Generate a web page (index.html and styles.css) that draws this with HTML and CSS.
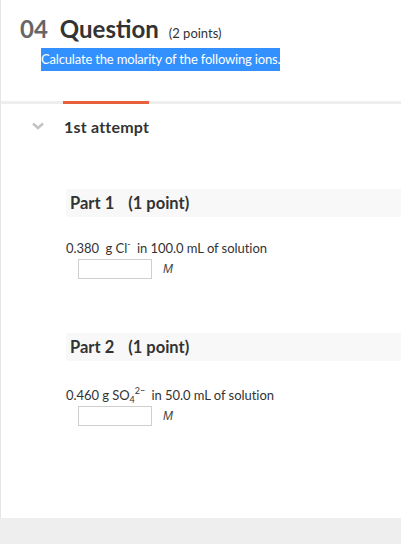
FILE: index.html
```html
<!DOCTYPE html>
<html>
<head>
<meta charset="utf-8">
<link rel="stylesheet" href="styles.css">
</head>
<body>
<div class="page">
  <div class="header">
    <h1 class="title"><span class="num">04</span><span class="q">Question</span><span class="pts">(2 points)</span></h1>
    <p class="prompt"><span class="sel">Calculate the molarity of the following ions.</span></p>
  </div>
  <div class="sep"><div class="tab"></div></div>
  <div class="attempt">
    <svg class="chev" width="12" height="8" viewBox="0 0 12 8"><path d="M1 1.5 L6 6 L11 1.5" fill="none" stroke="#c4c4c4" stroke-width="2.6"/></svg>
    <span class="att">1st attempt</span>
  </div>
  <div class="part">
    <div class="part-head"><span class="pname">Part 1</span><span>(1 point)</span></div>
    <div class="problem">0.380&nbsp; g Cl<sup class="sup">-</sup>&nbsp; in 100.0 mL of solution</div>
    <div class="answer"><span class="box"></span><span class="unit">M</span></div>
  </div>
  <div class="part part2">
    <div class="part-head"><span class="pname">Part 2</span><span>(1 point)</span></div>
    <div class="problem p2">0.460 g SO<sub class="sub">4</sub><sup class="sup2">2−</sup> in 50.0 mL of solution</div>
    <div class="answer"><span class="box"></span><span class="unit">M</span></div>
  </div>
</div>
<div class="footer"></div>
</body>
</html>
```
FILE: styles.css
```css
html, body { margin: 0; padding: 0; }
body { background: #eeeeee; font-family: Lato, "Open Sans", sans-serif; color: #333; width: 401px; height: 544px; overflow: hidden; }
.page { background: #fff; height: 518px; border-left: 1px solid #e6e6e6; box-sizing: border-box; }
.header { padding: 14px 0 0 19px; height: 88px; box-sizing: border-box; }
.title { margin: 0; font-weight: 700; line-height: 30px; display: flex; align-items: baseline; }
.num { font-size: 24px; color: #666; margin-right: 12px; }
.q { font-size: 24px; color: #333; margin-right: 10px; }
.pts { font-size: 13px; font-weight: 400; color: #333; }
.prompt { margin: 0 0 0 21px; font-size: 13px; line-height: 23px; letter-spacing: -0.17px; }
.sel { background: #3390ff; color: #fff; display: inline-block; }
.sep { height: 3px; background: #eeeeee; margin-top: 13px; position: relative; }
.tab { position: absolute; left: 62px; top: 0; width: 86px; height: 3px; background: #e8603c; }
.attempt { display: flex; align-items: center; height: 44px; padding-left: 31px; }
.chev { margin-right: 20px; }
.att { font-size: 16px; font-weight: 700; letter-spacing: 0.2px; color: #333; }
.part { padding-left: 65px; margin-top: 41px; }
.part2 { margin-top: 54px; }
.part-head { background: #f8f8f8; height: 28px; line-height: 28px; padding-left: 4px; font-size: 16.5px; font-weight: 700; color: #333; }
.pname { margin-right: 14px; }
.problem { margin-top: 22px; font-size: 13px; line-height: 18px; letter-spacing: -0.05px; color: #333; }
.p2 { margin-top: 25px; }
.sup { font-size: 9px; vertical-align: 6px; line-height: 0; }
.sub { font-size: 9px; vertical-align: -3px; line-height: 0; }
.sup2 { font-size: 9px; vertical-align: 6px; line-height: 0; margin-right: 3px; letter-spacing: 0; }
.answer { display: flex; align-items: center; margin-top: 2px; padding-left: 12px; }
.box { display: inline-block; width: 72px; height: 18px; border: 1px solid #cfcfcf; }
.unit { font-family: "Liberation Sans", Arial, sans-serif; font-style: italic; font-size: 12px; color: #444; margin-left: 11px; }
.footer { height: 26px; }
```
